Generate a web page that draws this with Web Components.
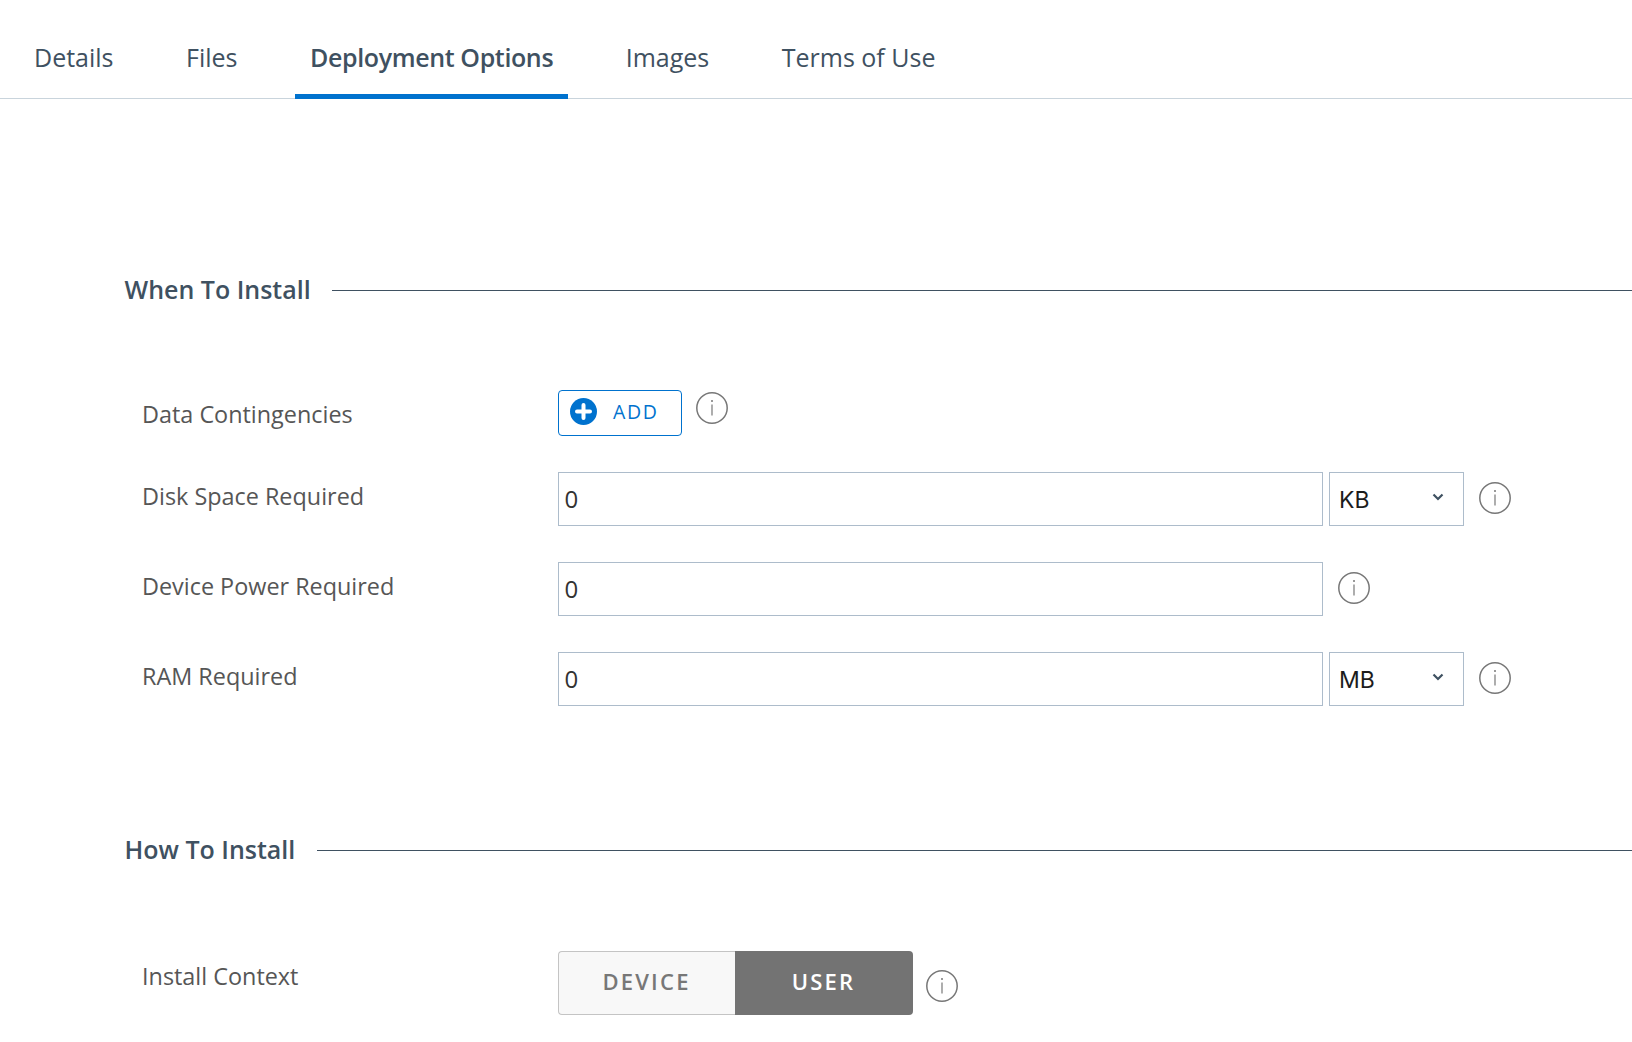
<!DOCTYPE html>
<html>
<head>
<meta charset="utf-8">
<style>
  html, body { margin: 0; padding: 0; background: #fff; height: 100%; overflow: hidden; }
  body { font-family: "Open Sans", "Liberation Sans", sans-serif; }
</style>
</head>
<body>
<tab-bar>
  <tab-item>Details</tab-item>
  <tab-item>Files</tab-item>
  <tab-item active>Deployment Options</tab-item>
  <tab-item>Images</tab-item>
  <tab-item>Terms of Use</tab-item>
</tab-bar>
<main-page>
  <form-section title="When To Install" style="margin-top:173px">
    <form-row label="Data Contingencies" style="height:46px;margin-top:82px;--label-top:2px;--label-bottom:0px">
      <add-button></add-button>
      <info-icon style="margin:2px 0 0 14px;align-self:flex-start"></info-icon>
    </form-row>
    <form-row label="Disk Space Required" style="margin-top:36px">
      <text-box value="0"></text-box>
      <unit-select value="KB"></unit-select>
      <info-icon style="margin:0 0 3px 15px"></info-icon>
    </form-row>
    <form-row label="Device Power Required" style="margin-top:36px">
      <text-box value="0"></text-box>
      <info-icon style="margin:0 0 3px 15px"></info-icon>
    </form-row>
    <form-row label="RAM Required" style="margin-top:36px">
      <text-box value="0"></text-box>
      <unit-select value="MB"></unit-select>
      <info-icon style="margin:0 0 3px 15px"></info-icon>
    </form-row>
  </form-section>
  <form-section title="How To Install" style="margin-top:126px">
    <form-row label="Install Context" style="height:64px;margin-top:83px;--label-bottom:14px">
      <toggle-group></toggle-group>
      <info-icon style="margin:5px 0 0 13px"></info-icon>
    </form-row>
  </form-section>
</main-page>

<script>
  // Tab strip along the top of the page
  class TabBar extends HTMLElement {
    constructor() {
      super();
      this.attachShadow({ mode: 'open' });
      this.shadowRoot.innerHTML = `
        <style>
          :host { display: flex; height: 98px; border-bottom: 1px solid #c9d4dc; padding-left: 19px; gap: 42.5px; }
        </style>
        <slot></slot>`;
    }
  }
  customElements.define('tab-bar', TabBar);

  class TabItem extends HTMLElement {
    constructor() {
      super();
      this.attachShadow({ mode: 'open' });
      this.shadowRoot.innerHTML = `
        <style>
          :host { display: block; box-sizing: border-box; height: 99px; padding: 39px 15px 0; font-size: 25px; line-height: 36px; color: #3f5161; }
          :host([active]) { font-weight: 600; border-bottom: 5px solid #0072ce; letter-spacing: -0.37px; }
        </style>
        <slot></slot>`;
    }
  }
  customElements.define('tab-item', TabItem);

  class MainPage extends HTMLElement {
    constructor() {
      super();
      this.attachShadow({ mode: 'open' });
      this.shadowRoot.innerHTML = `
        <style>
          :host { display: block; padding-left: 124.5px; }
        </style>
        <slot></slot>`;
    }
  }
  customElements.define('main-page', MainPage);

  // Section heading with the rule running off to the right, rows slotted below
  class FormSection extends HTMLElement {
    constructor() {
      super();
      this.attachShadow({ mode: 'open' });
      this.shadowRoot.innerHTML = `
        <style>
          :host { display: block; }
          .head { display: flex; align-items: center; height: 36px; gap: 21.5px; }
          h2 { margin: 0 0 2px; font-size: 25px; font-weight: 600; color: #3f5161; white-space: nowrap; }
          .rule { flex: 1; height: 1px; background: #3f5161; }
        </style>
        <div class="head"><h2></h2><div class="rule"></div></div>
        <slot></slot>`;
      this.shadowRoot.querySelector('h2').textContent = this.getAttribute('title');
    }
  }
  customElements.define('form-section', FormSection);

  class FormRow extends HTMLElement {
    constructor() {
      super();
      this.attachShadow({ mode: 'open' });
      this.shadowRoot.innerHTML = `
        <style>
          :host { display: flex; align-items: center; height: 54px; padding-left: 18px; }
          .label { flex: none; width: 415.5px; margin: var(--label-top, 0px) 0 var(--label-bottom, 6px) -0.5px; font-size: 23.4px; color: #565656; }
          .ctl { display: flex; align-items: center; flex: none; }
        </style>
        <div class="label"></div>
        <div class="ctl"><slot></slot></div>`;
      this.shadowRoot.querySelector('.label').textContent = this.getAttribute('label');
    }
  }
  customElements.define('form-row', FormRow);

  class AddButton extends HTMLElement {
    constructor() {
      super();
      this.attachShadow({ mode: 'open' });
      this.shadowRoot.innerHTML = `
        <style>
          :host { display: flex; box-sizing: border-box; align-items: center; width: 124px; height: 46px; border: 1px solid #0072ce; border-radius: 4px; padding-left: 11px; color: #0072ce; font-size: 19.5px; letter-spacing: 1.6px; }
          svg { margin: 0 16.5px 4px 0; }
          span { margin-bottom: 3px; }
        </style>
        <svg width="27" height="27" viewBox="0 0 27 27"><circle cx="13.5" cy="13.5" r="13.5" fill="#0072ce"/><path d="M13.5 7v13M7 13.5h13" stroke="#fff" stroke-width="4" stroke-linecap="round"/></svg>
        <span>ADD</span>`;
    }
  }
  customElements.define('add-button', AddButton);

  class InfoIcon extends HTMLElement {
    constructor() {
      super();
      this.attachShadow({ mode: 'open' });
      this.shadowRoot.innerHTML = `
        <style>
          :host { display: block; width: 32px; height: 32px; flex: none; }
          svg { display: block; }
        </style>
        <svg width="32" height="32" viewBox="0 0 32 32" fill="none" stroke="#777"><circle cx="16" cy="16" r="15.2" stroke-width="1.5"/><path d="M16 12.5v11" stroke-width="1.2"/><circle cx="16" cy="9" r="1" fill="#777" stroke="none"/></svg>`;
    }
  }
  customElements.define('info-icon', InfoIcon);

  class TextBox extends HTMLElement {
    constructor() {
      super();
      this.attachShadow({ mode: 'open' });
      this.shadowRoot.innerHTML = `
        <style>
          :host { display: block; box-sizing: border-box; width: 765px; height: 54px; border: 1px solid #adbccb; padding: 0 6px; font-size: 24px; line-height: 52px; color: #333; }
        </style>
        <span></span>`;
      this.shadowRoot.querySelector('span').textContent = this.getAttribute('value');
    }
  }
  customElements.define('text-box', TextBox);

  class UnitSelect extends HTMLElement {
    constructor() {
      super();
      this.attachShadow({ mode: 'open' });
      this.shadowRoot.innerHTML = `
        <style>
          :host { display: flex; box-sizing: border-box; align-items: center; justify-content: space-between; width: 135px; height: 54px; margin-left: 6px; border: 1px solid #adbccb; padding: 0 19px 0 9.5px; font-family: "Inter", "Liberation Sans", sans-serif; font-size: 23px; color: #1c1c1c; }
          span { margin-top: 1px; }
          svg { margin-top: -4px; }
        </style>
        <span></span>
        <svg width="12" height="8" viewBox="0 0 12 8" fill="none"><path d="M1.5 1.5 6 6l4.5-4.5" stroke="#3f5161" stroke-width="2.2"/></svg>`;
      this.shadowRoot.querySelector('span').textContent = this.getAttribute('value');
    }
  }
  customElements.define('unit-select', UnitSelect);

  class ToggleGroup extends HTMLElement {
    constructor() {
      super();
      this.attachShadow({ mode: 'open' });
      this.shadowRoot.innerHTML = `
        <style>
          :host { display: flex; width: 355px; height: 64px; font-size: 22px; font-weight: 600; letter-spacing: 2.2px; }
          div { display: flex; box-sizing: border-box; align-items: center; justify-content: center; padding-bottom: 4px; }
          .off { width: 177px; background: #f8f8f8; color: #777; border: 1px solid #c4c4c4; border-right: 0; border-radius: 4px 0 0 4px; }
          .on { flex: 1; background: #737373; color: #fff; border-radius: 0 4px 4px 0; }
        </style>
        <div class="off">DEVICE</div><div class="on">USER</div>`;
    }
  }
  customElements.define('toggle-group', ToggleGroup);
</script>
</body>
</html>
